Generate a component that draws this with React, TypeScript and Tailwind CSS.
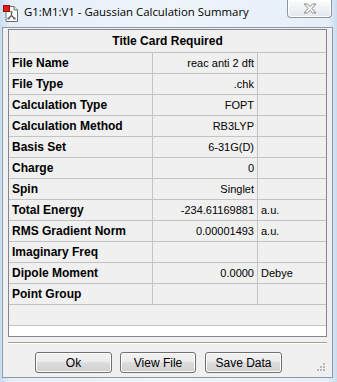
import React from "react";

const rows: { label: string; value: string; unit?: string }[] = [
  { label: "File Name", value: "reac anti 2 dft" },
  { label: "File Type", value: ".chk" },
  { label: "Calculation Type", value: "FOPT" },
  { label: "Calculation Method", value: "RB3LYP" },
  { label: "Basis Set", value: "6-31G(D)" },
  { label: "Charge", value: "0" },
  { label: "Spin", value: "Singlet" },
  { label: "Total Energy", value: "-234.61169881", unit: "a.u." },
  { label: "RMS Gradient Norm", value: "0.00001493", unit: "a.u." },
  { label: "Imaginary Freq", value: "" },
  { label: "Dipole Moment", value: "0.0000", unit: "Debye" },
  { label: "Point Group", value: "" },
];

function AppIcon() {
  return (
    <svg width="16" height="17" viewBox="0 0 16 17">
      <path d="M3 1.5 H11 L14.5 5 V16.5 H3 Z" fill="#fff" stroke="#6b6b6b" />
      <path d="M11 1.5 V5 H14.5" fill="#e8e8e8" stroke="#6b6b6b" />
      <line x1="8.5" y1="7" x2="8.5" y2="10.5" stroke="#555" strokeWidth="1.2" />
      <line x1="8.5" y1="10.5" x2="5.5" y2="13.5" stroke="#555" strokeWidth="1.2" />
      <line x1="8.5" y1="10.5" x2="11.5" y2="13.5" stroke="#555" strokeWidth="1.2" />
      <circle cx="8.5" cy="7" r="1.2" fill="#777" />
      <circle cx="5.5" cy="13.5" r="1.2" fill="#777" />
      <circle cx="11.5" cy="13.5" r="1.2" fill="#777" />
      <rect x="0.5" y="0.5" width="6" height="6" fill="#e0201b" stroke="#9a0e0b" />
    </svg>
  );
}

function CloseGlyph() {
  return (
    <svg width="14" height="11" viewBox="0 0 14 11">
      <path
        d="M1 1 H4.5 L7 3.6 L9.5 1 H13 L9 5.5 L13 10 H9.5 L7 7.4 L4.5 10 H1 L5 5.5 Z"
        fill="#f4f4f4"
        stroke="#8a8a8a"
        strokeWidth="1"
        strokeLinejoin="round"
      />
    </svg>
  );
}

function Grip() {
  const dots = [
    [6, 0],
    [3, 3],
    [6, 3],
    [0, 6],
    [3, 6],
    [6, 6],
  ];
  return (
    <svg width="8" height="8" viewBox="0 0 8 8" className="absolute right-[7px] bottom-[6px]">
      {dots.map(([x, y], i) => (
        <rect key={i} x={x} y={y} width="2" height="2" fill="#b8b8b8" />
      ))}
    </svg>
  );
}

function Btn({ children, w }: { children: React.ReactNode; w: string }) {
  return (
    <div
      className={`${w} h-[21px] flex items-center justify-center rounded-[3px] border border-[#707070] bg-[linear-gradient(#f2f2f2_0%,#ebebeb_49%,#dddddd_50%,#cfcfcf_100%)] text-[12px] text-black shadow-[inset_0_0_0_1px_#fcfcfc]`}
    >
      {children}
    </div>
  );
}

export default function App() {
  return (
    <div
      className="w-[337px] h-[382px] overflow-hidden bg-[linear-gradient(90deg,#c9ddef_0%,#e6eff8_3%,#eef4fa_50%,#e6eff8_97%,#c9ddef_100%)] flex flex-col"
      style={{ fontFamily: '"Liberation Sans", Arial, sans-serif' }}
    >
      {/* Title bar */}
      <div className="h-[27px] flex items-start relative">
        <div className="ml-[3px] mt-[5px]">
          <AppIcon />
        </div>
        <div
          className="ml-[5px] mt-[4px] text-[11.4px] text-black leading-[16px]"
          style={{ fontFamily: '"Open Sans", "Noto Sans", sans-serif' }}
        >
          G1:M1:V1 - Gaussian Calculation Summary
        </div>
        <div className="absolute left-[287px] top-0 w-[45px] h-[18px] rounded-b-[4px] border border-t-0 border-[#8d96a2] bg-[linear-gradient(#fbfcfd,#e3e8ee)] flex items-center justify-center shadow-[inset_0_0_0_1px_#ffffff]">
          <CloseGlyph />
        </div>
      </div>

      {/* Window body */}
      <div className="ml-[2px] mr-[4px] h-[351px] border border-[#8e99a6] bg-[#f0f0f0] relative flex flex-col px-[5px] pt-[1px]">
        {/* Table */}
        <div className="border border-[#828790] bg-white flex flex-col h-[308px]">
          <div className="h-[23px] border-b border-[#c3c3c3] bg-[#f0f0f0] flex items-center justify-center text-[12px] font-bold text-black">
            Title Card Required
          </div>
          {rows.map((r) => (
            <div key={r.label} className="h-[21px] flex border-b border-[#c3c3c3] bg-[#f0f0f0] text-black">
              <div className="w-[144px] shrink-0 border-r border-[#c3c3c3] flex items-center pl-[3px] text-[12px] font-bold">
                {r.label}
              </div>
              <div className="w-[105px] shrink-0 border-r border-[#c3c3c3] flex items-center justify-end pr-[3px] text-[11px]">
                {r.value}
              </div>
              <div className="flex-1 flex items-center pl-[3px] text-[11px]">{r.unit ?? ""}</div>
            </div>
          ))}
          <div className="h-[21px] border-b border-[#c3c3c3] bg-[#f0f0f0]" />
          <div className="flex-1 bg-white" />
        </div>

        {/* Separator */}
        <div className="mt-[5px] h-[2px] border-t border-[#a0a0a0] border-b border-b-white" />

        {/* Buttons */}
        <div className="mt-[8px] flex pl-[27px]">
          <Btn w="w-[77px]">Ok</Btn>
          <div className="w-[8px]" />
          <Btn w="w-[76px]">View File</Btn>
          <div className="w-[9px]" />
          <Btn w="w-[77px]">Save Data</Btn>
        </div>
        <Grip />
      </div>
    </div>
  );
}
